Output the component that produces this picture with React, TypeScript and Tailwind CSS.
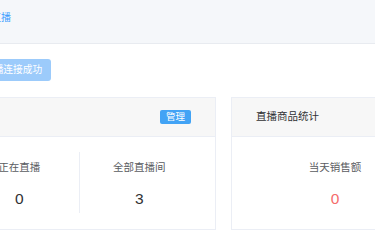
import React from "react";

const font = '"Liberation Sans", "Noto Sans CJK SC", sans-serif';

function Stat({ label, value, red, divider, width }: { label: string; value: string; red?: boolean; divider?: boolean; width: string }) {
  return (
    <div className={`${width} h-[61px] flex flex-col items-center pt-[8px] ${divider ? "border-r border-[#ebeef5]" : ""}`}>
      <div className="text-[10.5px] leading-[14px] text-[#5a5c61] whitespace-nowrap">{label}</div>
      <div className={`mt-[14px] text-[15.5px] leading-[22px] ${red ? "text-[#f56c6c]" : "text-[#303133]"}`}>{value}</div>
    </div>
  );
}

export default function App() {
  return (
    <div className="w-[375px] h-[250px] overflow-hidden bg-white" style={{ fontFamily: font }}>
      <div className="h-[44px] bg-[#f5f7fa] border-b border-[#e8ebf0]">
        <div className="pt-[11px] -ml-[9px] text-[10px] leading-[13px] text-[#409eff] whitespace-nowrap">直播</div>
      </div>
      <div className="mt-[15px] -ml-[22px] flex">
        <div className="h-[22px] pl-[6px] pr-[8.5px] flex items-center bg-[#9ccbfb] text-white text-[9.7px] rounded-[3px] whitespace-nowrap">直播连接成功</div>
      </div>
      <div className="mt-[16px] -ml-[57px] flex gap-[15px]">
        <div className="w-[273px] shrink-0 border border-[#ebeef5] bg-white">
          <div className="h-[39px] bg-[#f7f7f7] border-b border-[#ebeef5] flex items-center justify-end px-6">
            <div className="h-[14px] w-[31px] flex items-center justify-center rounded-[2px] bg-[#42a3f5] text-white text-[9.5px] leading-none">管理</div>
          </div>
          <div className="px-4 pt-[15px] pb-[16px] flex">
            <Stat width="w-[120.5px]" label="正在直播" value="0" divider />
            <Stat width="w-[120.5px]" label="全部直播间" value="3" />
          </div>
        </div>
        <div className="w-[273px] shrink-0 border border-[#ebeef5] bg-white">
          <div className="h-[39px] bg-[#f7f7f7] border-b border-[#ebeef5] flex items-center px-6">
            <div className="text-[10.5px] text-[#303133] whitespace-nowrap">直播商品统计</div>
          </div>
          <div className="pl-4 pt-[15px] pb-[16px] flex">
            <Stat width="w-[174px]" label="当天销售额" value="0" red />
          </div>
        </div>
      </div>
    </div>
  );
}
